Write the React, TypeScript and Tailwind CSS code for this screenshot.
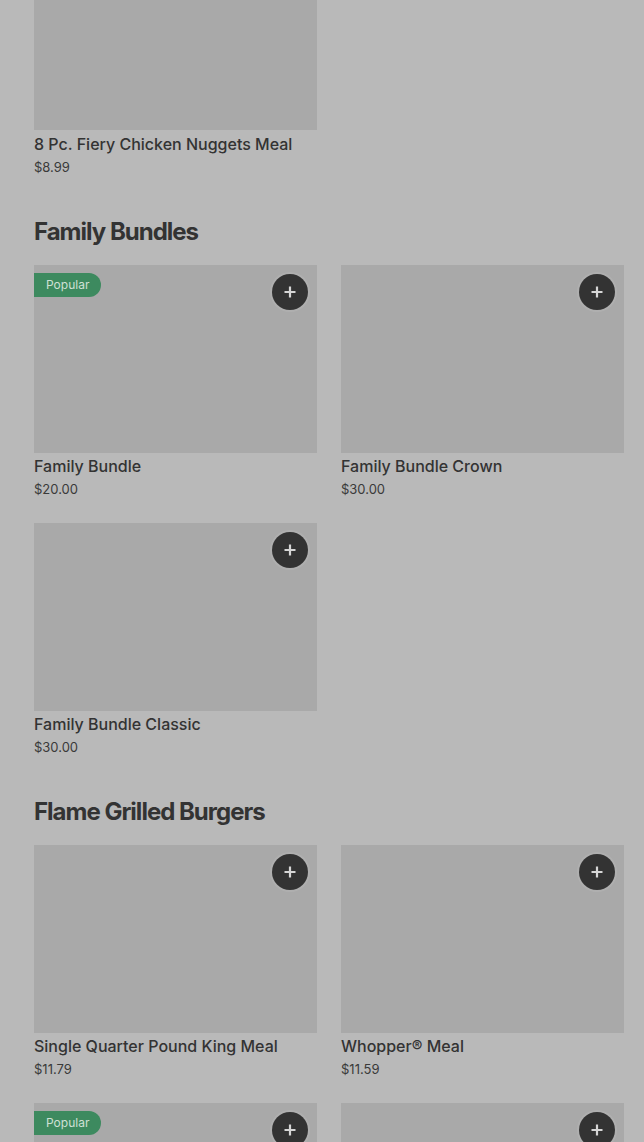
const items = {
  bundles: [
    { name: "Family Bundle", price: "$20.00", popular: true },
    { name: "Family Bundle Crown", price: "$30.00" },
    { name: "Family Bundle Classic", price: "$30.00" },
  ],
  burgers: [
    { name: "Single Quarter Pound King Meal", price: "$11.79" },
    { name: "Whopper\u00ae Meal", price: "$11.59" },
  ],
};

type Item = { name: string; price: string; popular?: boolean };

function PlusButton() {
  return (
    <button className="absolute right-[9px] top-[9px] flex h-9 w-9 items-center justify-center rounded-full bg-[#333333] shadow-[0_0_0_2px_rgba(255,255,255,0.08)]">
      <svg width="14" height="14" viewBox="0 0 14 14" fill="none">
        <path d="M7 1.5v11M1.5 7h11" stroke="#d6d6d6" strokeWidth="2.2" />
      </svg>
    </button>
  );
}

function PopularBadge() {
  return (
    <span className="absolute left-0 top-2 flex h-6 items-center rounded-r-full bg-[#3d8a5f] pl-3 pr-3 text-[12px] text-[#cfe0d5]">
      Popular
    </span>
  );
}

function Card({ item }: { item: Item }) {
  return (
    <div className="flex flex-col">
      <div className="relative h-[188px] bg-[#a9a9a9]">
        {item.popular && <PopularBadge />}
        <PlusButton />
      </div>
      <div className="mt-[1px] text-[16px] leading-6 font-medium text-[#333333]">{item.name}</div>
      <div className="text-[13px] leading-[22px] text-[#3a3a3a]">{item.price}</div>
    </div>
  );
}

function Section({ title, children }: { title: string; children: React.ReactNode }) {
  return (
    <section className="mt-[38px]">
      <h2 className="text-[24px] leading-8 font-bold tracking-[-1px] text-[#333333]">{title}</h2>
      <div className="mt-[17px] grid grid-cols-2 gap-x-6 gap-y-[23px]">{children}</div>
    </section>
  );
}

export default function App() {
  return (
    <div
      className="h-[1142px] overflow-hidden bg-[#b9b9b9] pl-[34px] pr-5"
      style={{ fontFamily: "Inter, 'Noto Sans', sans-serif" }}
    >
      <div className="grid grid-cols-2 gap-x-6">
        <div className="flex flex-col">
          <div className="h-[130px] bg-[#a9a9a9]" />
          <div className="mt-[2px] text-[16px] leading-6 font-medium text-[#333333]">
            8 Pc. Fiery Chicken Nuggets Meal
          </div>
          <div className="text-[13px] leading-[22px] text-[#3a3a3a]">$8.99</div>
        </div>
      </div>

      <Section title="Family Bundles">
        {items.bundles.map((it) => (
          <Card key={it.name} item={it} />
        ))}
      </Section>

      <Section title="Flame Grilled Burgers">
        {items.burgers.map((it) => (
          <Card key={it.name} item={it} />
        ))}
        <Card item={{ name: "", price: "", popular: true }} />
        <Card item={{ name: "", price: "" }} />
      </Section>
    </div>
  );
}
